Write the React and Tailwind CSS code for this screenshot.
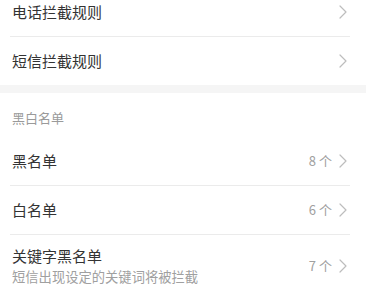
import React from 'react';

const font = { fontFamily: '"Noto Sans CJK SC", "Noto Sans", sans-serif' };

function Chevron() {
  return (
    <svg width="8" height="14" viewBox="0 0 8 14" className="shrink-0">
      <path d="M1 1 L7 7 L1 13" fill="none" stroke="#bdbdbd" strokeWidth="1.2" strokeLinejoin="round" strokeLinecap="round" />
    </svg>
  );
}

function Divider() {
  return <div className="h-px bg-[#ebebeb] ml-[10px] mr-[16px]" />;
}

function Row({ title, sub, count }) {
  return (
    <div className={`flex items-center pl-3 pr-[19px] ${sub ? 'h-[62px]' : 'h-12'}`}>
      <div className="flex-1 min-w-0">
        <div className="text-[15px] leading-[20px] text-[#333]">{title}</div>
        {sub && <div className="text-[13.3px] leading-[18px] text-[#a0a0a0] mt-[2px]">{sub}</div>}
      </div>
      {count != null && (
        <span className="text-[13px] text-[#a0a0a0] mr-[7px]">{count} 个</span>
      )}
      <Chevron />
    </div>
  );
}

export default function App() {
  const rules = ['电话拦截规则', '短信拦截规则'];
  const lists = [
    { title: '黑名单', count: 8 },
    { title: '白名单', count: 6 },
    { title: '关键字黑名单', count: 7, sub: '短信出现设定的关键词将被拦截' },
  ];

  return (
    <div className="w-[366px] h-[294px] overflow-hidden bg-white" style={font}>
      <div className="-mt-[12px]">
        {rules.map((r, i) => (
          <div key={r}>
            <Row title={r} />
            {i < rules.length - 1 && <Divider />}
          </div>
        ))}
        <div className="h-2 bg-[#f5f5f5]" />
        <div className="h-[44px] flex items-center pl-3 pt-[6px] text-[13px] text-[#9a9a9a]">黑白名单</div>
        {lists.map((l, i) => (
          <div key={l.title}>
            <Row title={l.title} sub={l.sub} count={l.count} />
            {i < lists.length - 1 && <Divider />}
          </div>
        ))}
      </div>
    </div>
  );
}
